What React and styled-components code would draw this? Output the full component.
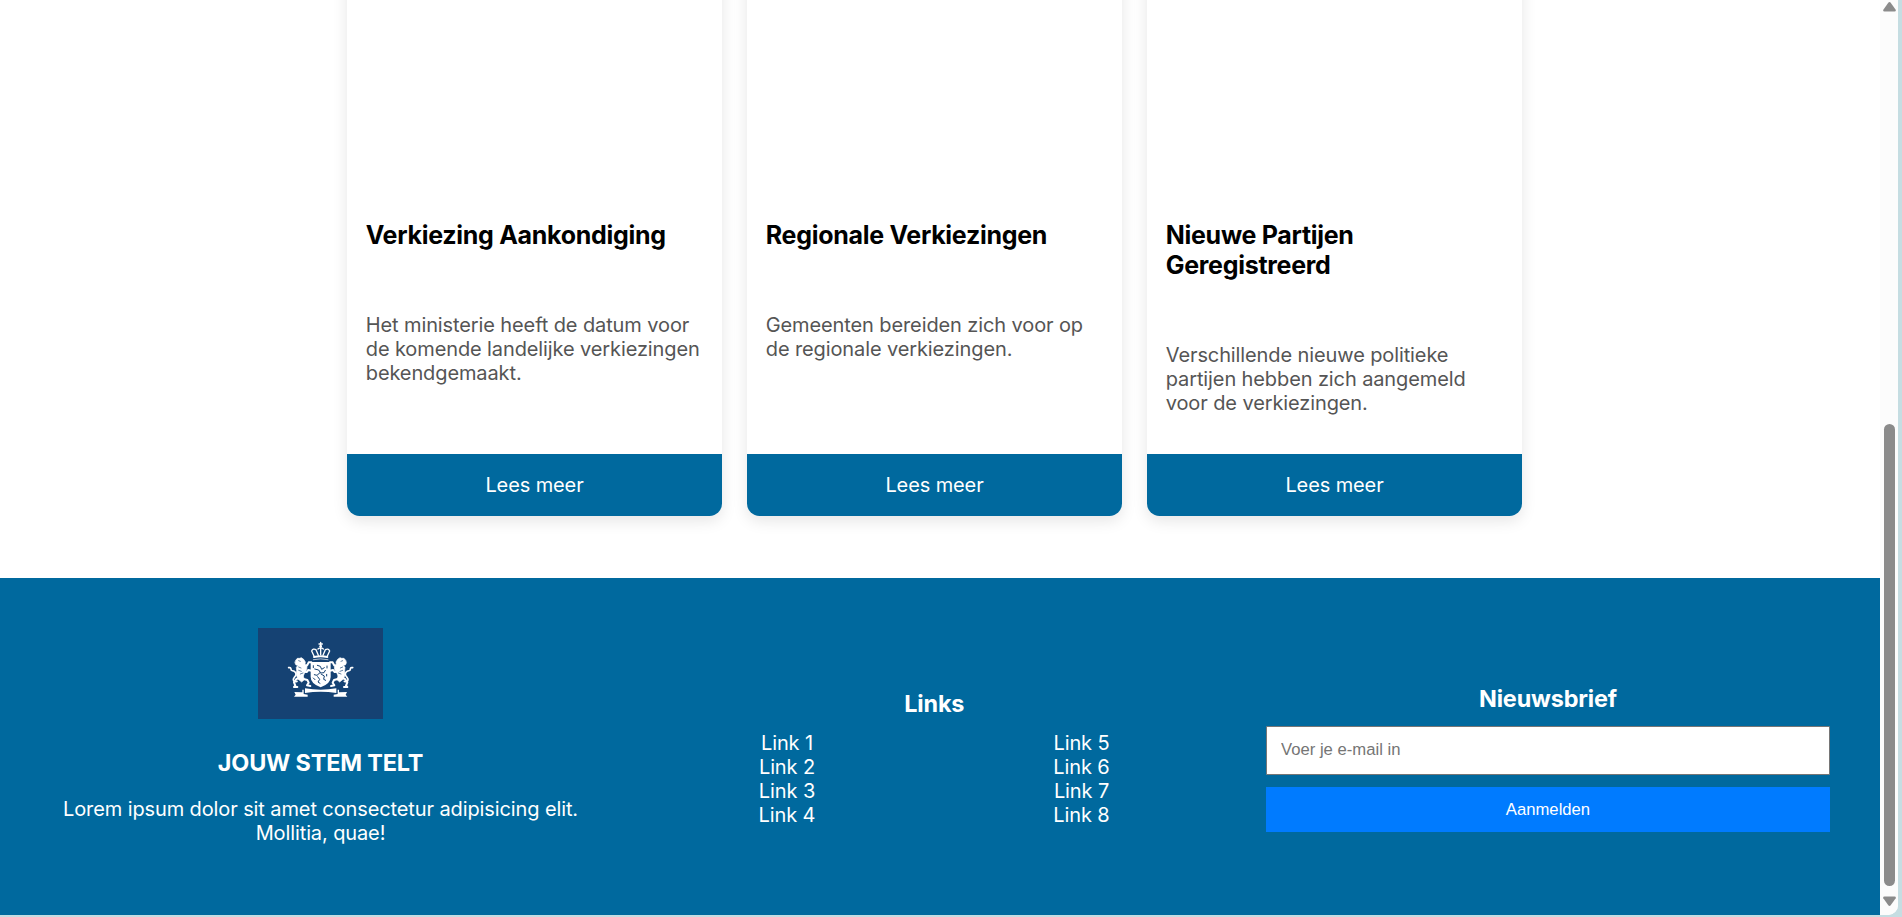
import React from "react";
import styled, { createGlobalStyle } from "styled-components";

const GlobalStyle = createGlobalStyle`
  *, *::before, *::after { box-sizing: border-box; }
  html, body { margin: 0; height: 917px; overflow: hidden; }
  body { font-family: Inter, "Liberation Sans", sans-serif; font-size: 20px; line-height: 24px; letter-spacing: -0.11px; color: #000; background: #c5dde2; }
  h3, p, ul { margin: 0; padding: 0; }
`;

const Frame = styled.div`
  width: 1898px;
  height: 915px;
  display: flex;
  background: #fff;
  border-bottom-right-radius: 10px;
  overflow: hidden;
`;

const Page = styled.div`
  width: 1880px;
  height: 915px;
  overflow: hidden;
  display: flex;
  flex-direction: column;
`;

const News = styled.main`
  flex: 0 0 578px;
  height: 578px;
  padding: 0 358px 62px 347px;
  display: grid;
  grid-template-columns: repeat(3, 375px);
  gap: 25px;
`;

const Card = styled.article`
  margin-top: -30px;
  display: flex;
  flex-direction: column;
  background: #fff;
  border-radius: 12.5px;
  box-shadow: 0 5px 15px rgba(0, 0, 0, 0.1);
  overflow: hidden;
`;

const CardImage = styled.div`
  flex: 0 0 231px;
`;

const CardBody = styled.div`
  flex: 1;
  padding: 19px 18.75px;
`;

const CardTitle = styled.h3`
  font-size: 25px;
  line-height: 30px;
  font-weight: 700;
  letter-spacing: -0.29px;
`;

const CardText = styled.p`
  margin-top: 63px;
  color: #555;
`;

const ReadMore = styled.a`
  height: 62px;
  display: flex;
  align-items: center;
  justify-content: center;
  background: #00699e;
  color: #fff;
`;

const Footer = styled.footer`
  flex: 1;
  padding: 50px 50px 0 38.5px;
  display: grid;
  grid-template-columns: repeat(3, 564px);
  gap: 49.75px;
  background: #00699e;
  color: #fff;
  text-align: center;
`;

const Column = styled.section`
  padding-top: ${(p) => p.$top || 0}px;
`;

const Heading = styled.h3`
  font-size: 23.4px;
  line-height: 28px;
  font-weight: 700;
  letter-spacing: -0.15px;
`;

const Brand = styled(Heading)`
  margin: 30px 0 20px;
`;

const Logo = styled.svg`
  display: block;
  width: 125px;
  height: 91px;
  margin: 0 auto;
`;

const LinkGrid = styled.div`
  margin-top: 13px;
  display: grid;
  grid-template-columns: 1fr 1fr;
  gap: 25px;
`;

const LinkList = styled.ul`
  list-style: none;
`;

const Form = styled.form`
  margin-top: 13px;
  display: flex;
  flex-direction: column;
  gap: 12px;
`;

const Email = styled.input`
  height: 49px;
  padding: 0 14px 2px;
  border: 1px solid #767676;
  border-radius: 1px;
  font: 16.67px "Liberation Sans", sans-serif;
  &::placeholder { color: #757575; }
`;

const Submit = styled.button`
  height: 45px;
  padding: 0;
  border: 0;
  background: #007bff;
  color: #fff;
  font: 16.67px "Liberation Sans", sans-serif;
`;

const ScrollTrack = styled.div`
  width: 18px;
  height: 915px;
  padding: 2px 0 8px 3px;
  display: flex;
  flex-direction: column;
  background: #fcfcfc;
`;

const Arrow = styled.svg`
  display: block;
  width: 13px;
  height: 10px;
  fill: #8b8b8b;
`;

const Thumb = styled.div`
  width: 11px;
  height: 462px;
  margin: 412px 0 10px 1px;
  border-radius: 6px;
  background: #8b8b8b;
`;

const news = [
  ["Verkiezing Aankondiging", "Het ministerie heeft de datum voor de komende landelijke verkiezingen bekendgemaakt."],
  ["Regionale Verkiezingen", "Gemeenten bereiden zich voor op de regionale verkiezingen."],
  ["Nieuwe Partijen Geregistreerd", "Verschillende nieuwe politieke partijen hebben zich aangemeld voor de verkiezingen."],
];

const links = [
  ["Link 1", "Link 2", "Link 3", "Link 4"],
  ["Link 5", "Link 6", "Link 7", "Link 8"],
];

function Lion() {
  return (
    <g fill="none" stroke="#fff" strokeLinecap="round" strokeLinejoin="round">
      <path fill="#fff" strokeWidth="2" d="M137 121l5-6 7 0 5-2 7 5 5 8-1 7 6 6-1 10-6 9-4 10 3 11-8 7-11-9-5-12 1-13-1-10 5-6-6-1-3-6z" />
      <path strokeWidth="6" d="M163 138l9-3 4-8 8 0M158 155l12 1 5-6 9 2M153 172l-14 5-7 10 4 10-4 4h10M158 176l14 4 4 8-5 8 10 2" />
      <path strokeWidth="5" d="M141 184c-11 3-14-5-8-12s7-12 1-17-11 0-11-7c0-5-3-6-7-5" />
      <path stroke="#154273" strokeWidth="2" d="M146 141l7 3M146 151l8 3M151 162l8-3M146 122l5 2" />
    </g>
  );
}

function Crest() {
  return (
    <Logo viewBox="24 24 375 273" aria-label="Rijkswapen">
      <rect x="24" y="24" width="375" height="273" fill="#154273" />
      <Lion />
      <g transform="matrix(-1 0 0 1 424 0)"><Lion /></g>
      <path d="M182 126h60v45q0 20-30 31-30-11-30-31z" fill="#fff" />
      <g fill="none" stroke="#154273" strokeWidth="3" strokeLinecap="round">
        <path d="M202 136l9 3 4 9 8-5M194 147l12 3 6 9 10-1 4-7M210 158l-9 8-8-2M213 162l10 6-2 10 6 3M203 170l6 8-5 8 6 4M190 137v6M231 138v6M190 174l5 5M230 163v5" />
      </g>
      <g fill="none" stroke="#fff" strokeWidth="4" strokeLinecap="round" strokeLinejoin="round">
        <path d="M212 67v20M207 72h10M192 108l-7-15q4-9 13-4l7 17M232 108l7-15q-4-9-13-4l-7 17M212 84v20M204 87q8-7 16 0" />
        <path strokeWidth="6" d="M192 111q20-5 40 0" />
        <path strokeWidth="2" d="M190 119q22-5 44 0" />
      </g>
      <g fill="#fff">
        <circle cx="212" cy="79" r="4" />
        <path d="M165 205q47 8 94 0v14q-47-7-94 0zM161 209v13l12 2v6h-41l5-6-4-8 24 1v-8zM263 209v13l-12 2v6h41l-5-6 4-8-24 1v-8z" />
      </g>
    </Logo>
  );
}

export default function App() {
  return (
    <>
      <GlobalStyle />
      <Frame>
        <Page>
          <News>
            {news.map(([title, text]) => (
              <Card key={title}>
                <CardImage />
                <CardBody>
                  <CardTitle>{title}</CardTitle>
                  <CardText>{text}</CardText>
                </CardBody>
                <ReadMore>Lees meer</ReadMore>
              </Card>
            ))}
          </News>
          <Footer>
            <Column>
              <Crest />
              <Brand>JOUW STEM TELT</Brand>
              <p>Lorem ipsum dolor sit amet consectetur adipisicing elit. Mollitia, quae!</p>
            </Column>
            <Column $top={62}>
              <Heading>Links</Heading>
              <LinkGrid>
                {links.map((list) => (
                  <LinkList key={list[0]}>
                    {list.map((l) => <li key={l}>{l}</li>)}
                  </LinkList>
                ))}
              </LinkGrid>
            </Column>
            <Column $top={57}>
              <Heading>Nieuwsbrief</Heading>
              <Form>
                <Email placeholder="Voer je e-mail in" />
                <Submit type="button">Aanmelden</Submit>
              </Form>
            </Column>
          </Footer>
        </Page>
        <ScrollTrack>
          <Arrow viewBox="0 0 13 10"><path d="M5.3.8q1.2-1.4 2.4 0l5 7Q13.300 9.500 11.500 9.500h-10Q-.3 9.500.3 7.800z" /></Arrow>
          <Thumb />
          <Arrow viewBox="0 0 13 10"><path d="M5.300 9.200q1.200 1.400 2.400 0l5-7Q13.300.5 11.500.5h-10Q-.3.5.3 2.200z" /></Arrow>
        </ScrollTrack>
      </Frame>
    </>
  );
}
